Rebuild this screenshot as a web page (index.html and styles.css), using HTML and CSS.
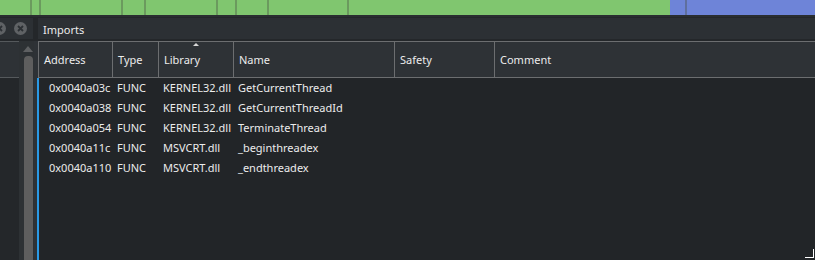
FILE: index.html
```html
<!DOCTYPE html>
<html lang="en">
<head>
    <meta charset="UTF-8">
    <title>Imports</title>
    <link rel="stylesheet" href="styles.css">
</head>
<body>
    <div class="overview">
        <div class="seg" style="width: 32px"></div>
        <div class="seg" style="width: 9px"></div>
        <div class="seg" style="width: 82px"></div>
        <div class="seg" style="width: 23px"></div>
        <div class="seg" style="width: 72px"></div>
        <div class="seg" style="width: 19px"></div>
        <div class="seg" style="width: 32px"></div>
        <div class="seg" style="width: 80px"></div>
        <div class="seg plain" style="width: 321px"></div>
        <div class="seg blue" style="width: 17px"></div>
        <div class="seg blue last"></div>
    </div>

    <div class="workspace">
        <div class="side">
            <div class="side-title">
                <svg class="close-btn" width="13" height="13" viewBox="0 0 13 13">
                    <circle cx="6.5" cy="6.5" r="6.5" fill="#5f6265"/>
                    <path d="M4 4 L9 9 M9 4 L4 9" stroke="#2c3034" stroke-width="1.8"/>
                </svg>
                <svg class="close-btn" width="13" height="13" viewBox="0 0 13 13">
                    <circle cx="6.5" cy="6.5" r="6.5" fill="#5f6265"/>
                    <path d="M4 4 L9 9 M9 4 L4 9" stroke="#2c3034" stroke-width="1.8"/>
                </svg>
            </div>
            <div class="side-body">
                <div class="side-list">
                    <div class="side-head"></div>
                </div>
                <div class="scrollbar">
                    <div class="arrow"></div>
                    <div class="thumb"></div>
                </div>
                <div class="side-gap"></div>
            </div>
        </div>

        <div class="dock">
            <div class="dock-title">Imports</div>
            <div class="table">
                <div class="thead">
                    <div class="th">Address</div>
                    <div class="th">Type</div>
                    <div class="th sorted">Library</div>
                    <div class="th">Name</div>
                    <div class="th">Safety</div>
                    <div class="th">Comment</div>
                </div>
                <div class="tbody">
                    <div class="tr"><span class="td addr">0x0040a03c</span><span class="td">FUNC</span><span class="td">KERNEL32.dll</span><span class="td">GetCurrentThread</span><span class="td"></span><span class="td"></span></div>
                    <div class="tr"><span class="td addr">0x0040a038</span><span class="td">FUNC</span><span class="td">KERNEL32.dll</span><span class="td">GetCurrentThreadId</span><span class="td"></span><span class="td"></span></div>
                    <div class="tr"><span class="td addr">0x0040a054</span><span class="td">FUNC</span><span class="td">KERNEL32.dll</span><span class="td">TerminateThread</span><span class="td"></span><span class="td"></span></div>
                    <div class="tr"><span class="td addr">0x0040a11c</span><span class="td">FUNC</span><span class="td">MSVCRT.dll</span><span class="td">_beginthreadex</span><span class="td"></span><span class="td"></span></div>
                    <div class="tr"><span class="td addr">0x0040a110</span><span class="td">FUNC</span><span class="td">MSVCRT.dll</span><span class="td">_endthreadex</span><span class="td"></span><span class="td"></span></div>
                </div>
            </div>
        </div>
    </div>

    <div class="grip"></div>
</body>
</html>
```

FILE: styles.css
```css
html, body {
    margin: 0;
    height: 260px;
    overflow: hidden;
}
body {
    background-color: #24272a;
    font-family: "Noto Sans", "Open Sans", sans-serif;
    font-size: 11px;
    color: #ececec;
    display: flex;
    flex-direction: column;
    position: relative;
}

/* graph overview strip */
.overview {
    display: flex;
    height: 15px;
    background-color: #80c66f;
    border-bottom: 2px solid #2a2e31;
    flex-shrink: 0;
}
.seg {
    box-sizing: border-box;
    height: 15px;
    border-right: 2px solid #6b9a5e;
    flex-shrink: 0;
}
.seg.plain {
    border-right: none;
}
.seg.blue {
    background-color: #6e84d8;
    border-right-color: #5f6f9e;
}
.seg.last {
    flex: 1;
    border-right: none;
}

.workspace {
    flex: 1;
    display: flex;
    min-height: 0;
}

/* left dock */
.side {
    width: 38px;
    display: flex;
    flex-direction: column;
    flex-shrink: 0;
}
.side-title {
    height: 21px;
    margin-top: 1px;
    margin-right: 5px;
    margin-left: -7px;
    background-color: #2c3034;
    display: flex;
    align-items: center;
    gap: 8px;
}
.close-btn {
    display: block;
}
.side-body {
    flex: 1;
    display: flex;
    margin-top: 2px;
}
.side-list {
    width: 19px;
    background-color: #24272a;
}
.side-head {
    height: 35px;
    background-color: #2e3236;
    border-top: 1px solid #55595c;
    border-bottom: 1px solid #55595c;
}
.scrollbar {
    width: 12px;
    background-color: #2d3134;
    padding: 0 0 0 3px;
    display: flex;
    flex-direction: column;
    align-items: center;
}
.arrow {
    width: 0;
    height: 0;
    border-left: 5px solid transparent;
    border-right: 5px solid transparent;
    border-bottom: 6px solid #5e6062;
    margin-top: 5px;
}
.thumb {
    width: 9px;
    flex: 1;
    margin-top: 4px;
    background-color: #5e5e5e;
    border-radius: 4px 4px 0 0;
}
.side-gap {
    flex: 1;
    background-color: #2e3236;
}

/* imports dock */
.dock {
    flex: 1;
    display: flex;
    flex-direction: column;
    min-width: 0;
}
.dock-title {
    box-sizing: border-box;
    height: 21px;
    margin-top: 1px;
    padding: 2px 0 0 5px;
    line-height: 20px;
    background-color: #2c3034;
}
.table {
    flex: 1;
    margin-top: 2px;
    display: flex;
    flex-direction: column;
}
.thead,
.tr {
    display: grid;
    grid-template-columns: 74px 46px 75px 161px 100px 1fr;
}
.thead {
    height: 35px;
    background-color: #2e3236;
    border-top: 1px solid #6c6e70;
    border-bottom: 1px solid #6c6e70;
    border-left: 1px solid #6c6e70;
}
.th {
    border-right: 1px solid #6c6e70;
    padding-left: 5px;
    line-height: 35px;
    position: relative;
}
.th:last-child {
    border-right: none;
}
.th.sorted::before {
    content: "";
    position: absolute;
    left: 34px;
    top: 1px;
    border-left: 3px solid transparent;
    border-right: 3px solid transparent;
    border-bottom: 3px solid #d8d8d8;
}
.tbody {
    flex: 1;
    background-color: #222528;
    border-left: 2px solid #2a9ae6;
    margin-left: -1px;
}
.tr {
    height: 20px;
    line-height: 20px;
}
.td {
    padding-left: 4px;
    white-space: nowrap;
}
.td.addr {
    padding-left: 10px;
}

/* resize grip */
.grip {
    position: absolute;
    right: 1px;
    bottom: 2px;
    width: 8px;
    height: 8px;
    border-right: 1px solid #ffffff;
    border-bottom: 1px solid #ffffff;
}
```
